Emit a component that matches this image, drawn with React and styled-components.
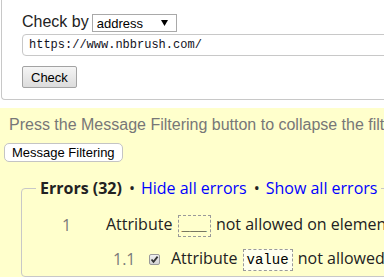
import React from 'react';
import styled, { createGlobalStyle } from 'styled-components';

const GlobalStyle = createGlobalStyle`
  html, body {
    margin: 0;
    padding: 0;
    background: #fff;
    overflow: hidden;
  }
  #root {
    width: 800px;
  }
`;

const TopPanel = styled.section`
  margin-left: 1px;
  padding: 14px 0 11px 20px;
  border-left: 1px solid #c8c8c8;
  border-bottom: 1px solid #c8c8c8;
  border-bottom-left-radius: 4px;
  font-family: 'Liberation Sans', Arial, sans-serif;
`;

const CheckRow = styled.div`
  display: flex;
  align-items: center;
  height: 18px;
`;

const Label = styled.span`
  font-size: 16px;
  line-height: 18px;
  color: #222;
  margin-right: 3px;
  position: relative;
  top: -1px;
`;

const Select = styled.div`
  box-sizing: border-box;
  width: 85px;
  height: 18px;
  display: flex;
  align-items: center;
  justify-content: space-between;
  padding: 0 8px 0 4px;
  border: 1px solid #a9a9a9;
  background: #fff;
  font-size: 13px;
  color: #000;
`;

const UrlInput = styled.div`
  box-sizing: border-box;
  margin-top: 2px;
  width: 600px;
  height: 22px;
  display: flex;
  align-items: center;
  padding-left: 6px;
  border: 1px solid #c8c8c8;
  border-radius: 4px;
  font-family: 'Liberation Mono', 'Courier New', monospace;
  font-size: 12px;
  color: #112;
`;

const CheckButton = styled.button`
  box-sizing: border-box;
  margin-top: 10px;
  height: 22px;
  padding: 0 8px;
  border: 1px solid #a3a3a3;
  border-radius: 2px;
  background: linear-gradient(#f5f5f5, #dcdcdc);
  font-family: 'Liberation Sans', Arial, sans-serif;
  font-size: 13px;
  color: #000;
`;

const Results = styled.section`
  margin-top: 8px;
  padding: 8px 0 0 4px;
  height: 200px;
  background: #ffffcc;
`;

const Hint = styled.p`
  margin: 0 0 0 5px;
  font-family: 'Liberation Sans', Arial, sans-serif;
  font-size: 16px;
  line-height: 18px;
  color: #777;
  white-space: nowrap;
`;

const FilterButton = styled.button`
  box-sizing: border-box;
  margin-top: 9px;
  height: 19px;
  padding: 0 7px;
  border: 1px solid #c4c4c4;
  border-radius: 5px;
  background: #fff;
  font-family: 'Liberation Sans', Arial, sans-serif;
  font-size: 13px;
  line-height: 17px;
  color: #000;
`;

const Fieldset = styled.fieldset`
  margin: 15px 0 0 17px;
  padding: 0 0 0 14px;
  min-width: 0;
  border: 1px solid #c8c8c8;
  border-radius: 4px;
  font-family: 'Open Sans', sans-serif;
  font-size: 16px;
  color: #222;
`;

const Legend = styled.legend`
  padding: 0 4px;
  line-height: 22px;
  white-space: nowrap;
`;

const Title = styled.b`
  font-weight: 700;
`;

const Dot = styled.span`
  margin: 0 6px 0 7px;
`;

const ToggleLink = styled.a`
  color: #0000ff;
  text-decoration: none;
  cursor: pointer;
`;

const Entries = styled.div`
  padding-top: 9px;
`;

const Row = styled.div`
  display: flex;
  align-items: center;
  height: 34px;
  padding-left: ${(p) => (p.$nested ? 77 : 26)}px;
  white-space: nowrap;
`;

const Num = styled.span`
  width: ${(p) => (p.$nested ? 36 : 44)}px;
  color: #7a7a7a;
  flex-shrink: 0;
`;

const Tick = styled.span`
  box-sizing: border-box;
  width: 11px;
  height: 11px;
  margin-right: 11px;
  display: flex;
  align-items: center;
  justify-content: center;
  border: 1px solid #9a9a9a;
  border-radius: 2px;
  background: linear-gradient(#f0f0f0, #d4d4d4);
  flex-shrink: 0;
`;

const Message = styled.span`
  line-height: 22px;
  color: #222;
`;

const Code = styled.code`
  margin: 0 1px;
  padding: 2px 3px;
  border: 1px dashed #9a9a9a;
  font-family: 'Liberation Mono', 'Courier New', monospace;
  font-size: 14px;
  color: #000;
  background: ${(p) => (p.$light ? '#ffffee' : 'transparent')};
`;

const Arrow = () => (
  <svg width="7" height="6" viewBox="0 0 7 6">
    <polygon points="0,0 7,0 3.5,6" fill="#000" />
  </svg>
);

const CheckMark = () => (
  <svg width="9" height="9" viewBox="0 0 9 9">
    <path d="M1.5 4.5 L3.5 6.8 L7.6 1.6" stroke="#333" strokeWidth="1.8" fill="none" />
  </svg>
);

const App = () => {
  return (
    <>
      <GlobalStyle />
      <TopPanel>
        <CheckRow>
          <Label>Check by</Label>
          <Select>
            <span>address</span>
            <Arrow />
          </Select>
        </CheckRow>
        <UrlInput>https://www.nbbrush.com/</UrlInput>
        <CheckButton>Check</CheckButton>
      </TopPanel>
      <Results>
        <Hint>Press the Message Filtering button to collapse the filtered messages.</Hint>
        <FilterButton>Message Filtering</FilterButton>
        <Fieldset>
          <Legend>
            <Title>Errors (32)</Title>
            <Dot>•</Dot>
            <ToggleLink>Hide all errors</ToggleLink>
            <Dot>•</Dot>
            <ToggleLink>Show all errors</ToggleLink>
          </Legend>
          <Entries>
            <Row>
              <Num>1</Num>
              <Message>
                Attribute <Code>___</Code> not allowed on element <Code>a</Code> at this point.
              </Message>
            </Row>
            <Row $nested>
              <Num $nested>1.1</Num>
              <Tick>
                <CheckMark />
              </Tick>
              <Message>
                Attribute <Code $light>value</Code> not allowed on element <Code>a</Code> at this point.
              </Message>
            </Row>
          </Entries>
        </Fieldset>
      </Results>
    </>
  );
};

export default App;
